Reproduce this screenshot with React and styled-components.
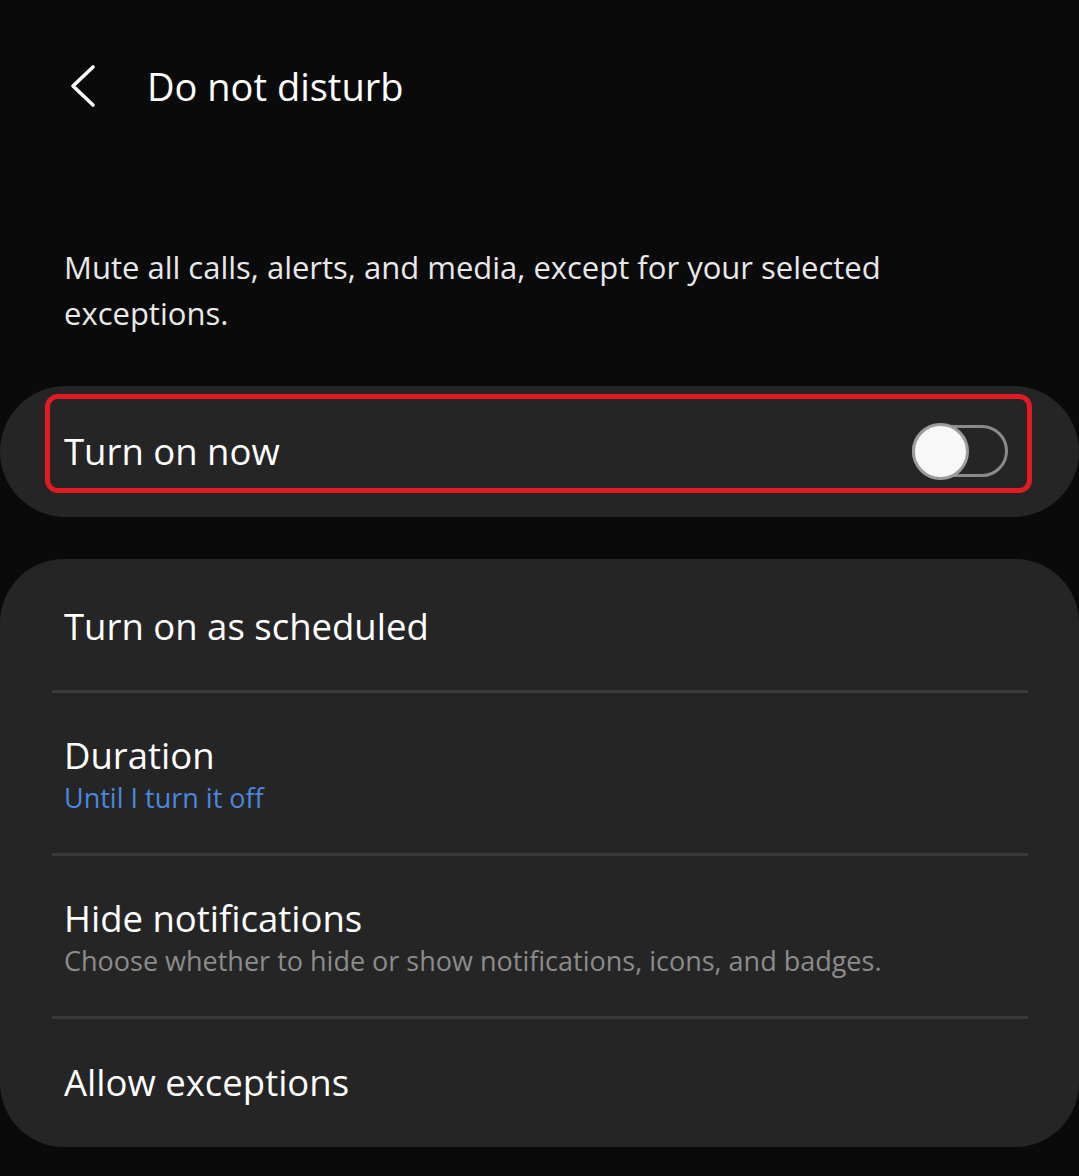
import React, {useState} from 'react'
import styled, {createGlobalStyle} from 'styled-components'

const GlobalStyle = createGlobalStyle`
    body {
        margin: 0;
        background: #0a0a0a;
        font-family: "Open Sans", "Noto Sans", sans-serif;
        -webkit-font-smoothing: antialiased;
    }
`

const Screen = styled.div`
    width: 1079px;
    min-height: 1176px;
    background: #0a0a0a;
    color: #fafafa;
    padding-top: 46px;
    box-sizing: border-box;
`

const Header = styled.header`
    display: flex;
    align-items: center;
    height: 80px;
    padding-left: 66px;
`

const BackButton = styled.button`
    display: flex;
    align-items: center;
    justify-content: center;
    width: 34px;
    height: 48px;
    padding: 0;
    border: none;
    background: none;
    cursor: pointer;
`

const Title = styled.h1`
    margin: 0 0 0 47px;
    font-size: 38px;
    font-weight: 400;
    color: #ffffff;
`

const Description = styled.p`
    margin: 118px 0 0;
    padding: 0 64px;
    font-size: 31px;
    line-height: 46px;
    color: #e8e8e8;
`

const PillCard = styled.div`
    margin-top: 50px;
    height: 131px;
    border-radius: 66px;
    background: #252525;
    padding: 8px 47px 0 45px;
    box-sizing: border-box;
`

const Highlight = styled.div`
    display: flex;
    align-items: center;
    justify-content: space-between;
    height: 99px;
    border: 5px solid #e01b24;
    border-radius: 13px;
    padding: 15px 19px 0 14px;
    box-sizing: border-box;
`

const RowTitle = styled.div`
    font-size: 36.5px;
    line-height: 44px;
    color: #ffffff;
`

const RowSub = styled.div`
    font-size: 27px;
    line-height: 42px;
    color: ${props => props.accent ? '#4a88dc' : '#8c8c8c'};
`

const Track = styled.button`
    position: relative;
    width: 96px;
    height: 52px;
    padding: 0;
    border: 3px solid #8a8a8a;
    border-radius: 26px;
    background: ${props => props.on ? '#3e91ff' : 'transparent'};
    box-sizing: border-box;
    cursor: pointer;
`

const Thumb = styled.span`
    position: absolute;
    top: -5px;
    left: ${props => props.on ? '38px' : '-3px'};
    width: 57px;
    height: 57px;
    border-radius: 50%;
    background: #f8f8f8;
    border: 3px solid #9c9c9c;
    box-sizing: border-box;
`

const ListCard = styled.div`
    margin-top: 42px;
    border-radius: 64px;
    background: #252525;
    overflow: hidden;
`

const Row = styled.div`
    padding: ${props => props.pad};
    padding-left: 64px;
`

const Divider = styled.div`
    height: 3px;
    margin: 0 51px 0 52px;
    background: #3a3a3a;
`

const Chevron = () => (
    <svg width="30" height="44" viewBox="0 0 30 44">
        <polyline points="25,3 5,22 25,41" fill="none" stroke="#ffffff" strokeWidth="3.6" strokeLinecap="round" strokeLinejoin="round" />
    </svg>
)

const Switch = ({on, onToggle}) => (
    <Track on={on ? 1 : 0} onClick={onToggle}>
        <Thumb on={on ? 1 : 0} />
    </Track>
)

const App = () => {
    const [dndOn, setDndOn] = useState(false)

    return (
        <Screen>
            <GlobalStyle />
            <Header>
                <BackButton><Chevron /></BackButton>
                <Title>Do not disturb</Title>
            </Header>

            <Description>
                Mute all calls, alerts, and media, except for your selected exceptions.
            </Description>

            <PillCard>
                <Highlight>
                    <RowTitle>Turn on now</RowTitle>
                    <Switch on={dndOn} onToggle={() => setDndOn(!dndOn)} />
                </Highlight>
            </PillCard>

            <ListCard>
                <Row pad="45px 0 42px">
                    <RowTitle>Turn on as scheduled</RowTitle>
                </Row>
                <Divider />
                <Row pad="40px 0 34px">
                    <RowTitle>Duration</RowTitle>
                    <RowSub accent>Until I turn it off</RowSub>
                </Row>
                <Divider />
                <Row pad="40px 0 34px">
                    <RowTitle>Hide notifications</RowTitle>
                    <RowSub>Choose whether to hide or show notifications, icons, and badges.</RowSub>
                </Row>
                <Divider />
                <Row pad="41px 0 43px">
                    <RowTitle>Allow exceptions</RowTitle>
                </Row>
            </ListCard>
        </Screen>
    )
}

export default App
